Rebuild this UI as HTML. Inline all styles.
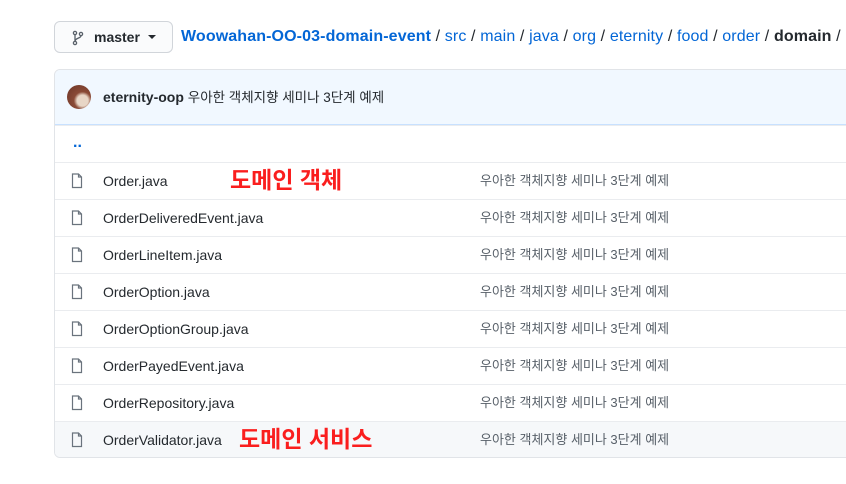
<!DOCTYPE html>
<html><head><meta charset="utf-8"><style>
*{margin:0;padding:0;box-sizing:border-box}
body{width:846px;height:484px;background:#fff;font-family:"Liberation Sans","Noto Sans CJK KR",sans-serif;color:#24292e;position:relative;overflow:hidden}
.btn{position:absolute;left:54px;top:21px;width:119px;height:32px;border:1px solid #d1d5da;border-radius:6px;background:#fafbfc;font-size:14px;font-weight:bold}
.crumb{position:absolute;left:181px;top:28px;font-size:16px;line-height:18px;white-space:nowrap;letter-spacing:0.12px}
.crumb a{color:#0366d6;text-decoration:none}
.box{position:absolute;left:54px;top:69px;width:810px;height:389px;border:1px solid #e1e4e8;border-radius:6px;overflow:hidden}
.hdr{height:55px;background:#f1f8ff;border-bottom:1px solid #c8e1ff;position:relative;font-size:14px}
.row{height:37px;border-top:1px solid #eaecef;position:relative;font-size:14px}
.row:first-of-type{border-top:none}
.ic{position:absolute;left:16px;top:10px}
.nm,.msg{position:absolute;top:10px;line-height:16px;height:16px}
.nm{left:48px}
.msg{left:425px;color:#586069;font-size:13px}
.red{position:absolute;color:#fa1e1e;font-weight:bold;font-size:23px;line-height:28px}
</style></head><body>
<div class="btn">
<svg style="position:absolute;left:16px;top:8px" width="14" height="16" viewBox="0 0 14 16"><circle cx="4" cy="3" r="1.6" fill="none" stroke="#586069" stroke-width="1.3"/><circle cx="4" cy="13" r="1.6" fill="none" stroke="#586069" stroke-width="1.3"/><circle cx="10" cy="4" r="1.6" fill="none" stroke="#586069" stroke-width="1.3"/><path d="M4 4.6V11.4M10 5.6c0 3-6 2-6 5.8" fill="none" stroke="#586069" stroke-width="1.3"/></svg>
<span style="position:absolute;left:39px;top:7px">master</span>
<span style="position:absolute;left:93px;top:13px;border-left:4px solid transparent;border-right:4px solid transparent;border-top:4px solid #24292e"></span>
</div>
<div class="crumb"><a href="#" style="font-weight:bold">Woowahan-OO-03-domain-event</a> / <a href="#">src</a> / <a href="#">main</a> / <a href="#">java</a> / <a href="#">org</a> / <a href="#">eternity</a> / <a href="#">food</a> / <a href="#">order</a> / <b>domain</b> /</div>
<div class="box">
<div class="hdr">
<div style="position:absolute;left:12px;top:15px;width:24px;height:24px;border-radius:50%;background:radial-gradient(circle at 65% 65%,#e8d6c6 0 25%,#8a4a36 40%,#6b3426)"></div>
<div style="position:absolute;left:48px;top:19px;line-height:16px;height:16px"><b>eternity-oop</b> <span style="font-size:13.5px">우아한 객체지향 세미나 3단계 예제</span></div>
</div>
<div class="row"><span style="position:absolute;left:18px;top:8px;color:#0366d6;font-size:16px;font-weight:bold">..</span></div>
<div class="row"><svg class="ic" width="12" height="16" viewBox="0 0 12 16"><path d="M1.5 1h6l3 3v10.5h-9z M7.5 1v3h3" fill="none" stroke="#6a737d" stroke-width="1.2"/></svg><span class="nm">Order.java</span><span class="msg">우아한 객체지향 세미나 3단계 예제</span></div>
<div class="row"><svg class="ic" width="12" height="16" viewBox="0 0 12 16"><path d="M1.5 1h6l3 3v10.5h-9z M7.5 1v3h3" fill="none" stroke="#6a737d" stroke-width="1.2"/></svg><span class="nm">OrderDeliveredEvent.java</span><span class="msg">우아한 객체지향 세미나 3단계 예제</span></div>
<div class="row"><svg class="ic" width="12" height="16" viewBox="0 0 12 16"><path d="M1.5 1h6l3 3v10.5h-9z M7.5 1v3h3" fill="none" stroke="#6a737d" stroke-width="1.2"/></svg><span class="nm">OrderLineItem.java</span><span class="msg">우아한 객체지향 세미나 3단계 예제</span></div>
<div class="row"><svg class="ic" width="12" height="16" viewBox="0 0 12 16"><path d="M1.5 1h6l3 3v10.5h-9z M7.5 1v3h3" fill="none" stroke="#6a737d" stroke-width="1.2"/></svg><span class="nm">OrderOption.java</span><span class="msg">우아한 객체지향 세미나 3단계 예제</span></div>
<div class="row"><svg class="ic" width="12" height="16" viewBox="0 0 12 16"><path d="M1.5 1h6l3 3v10.5h-9z M7.5 1v3h3" fill="none" stroke="#6a737d" stroke-width="1.2"/></svg><span class="nm">OrderOptionGroup.java</span><span class="msg">우아한 객체지향 세미나 3단계 예제</span></div>
<div class="row"><svg class="ic" width="12" height="16" viewBox="0 0 12 16"><path d="M1.5 1h6l3 3v10.5h-9z M7.5 1v3h3" fill="none" stroke="#6a737d" stroke-width="1.2"/></svg><span class="nm">OrderPayedEvent.java</span><span class="msg">우아한 객체지향 세미나 3단계 예제</span></div>
<div class="row"><svg class="ic" width="12" height="16" viewBox="0 0 12 16"><path d="M1.5 1h6l3 3v10.5h-9z M7.5 1v3h3" fill="none" stroke="#6a737d" stroke-width="1.2"/></svg><span class="nm">OrderRepository.java</span><span class="msg">우아한 객체지향 세미나 3단계 예제</span></div>
<div class="row" style="background:#f6f8fa;height:38px"><svg class="ic" width="12" height="16" viewBox="0 0 12 16"><path d="M1.5 1h6l3 3v10.5h-9z M7.5 1v3h3" fill="none" stroke="#6a737d" stroke-width="1.2"/></svg><span class="nm">OrderValidator.java</span><span class="msg">우아한 객체지향 세미나 3단계 예제</span></div>
</div>
<div class="red" style="left:230px;top:166px">도메인 객체</div>
<div class="red" style="left:239px;top:425px">도메인 서비스</div>
</body></html>
